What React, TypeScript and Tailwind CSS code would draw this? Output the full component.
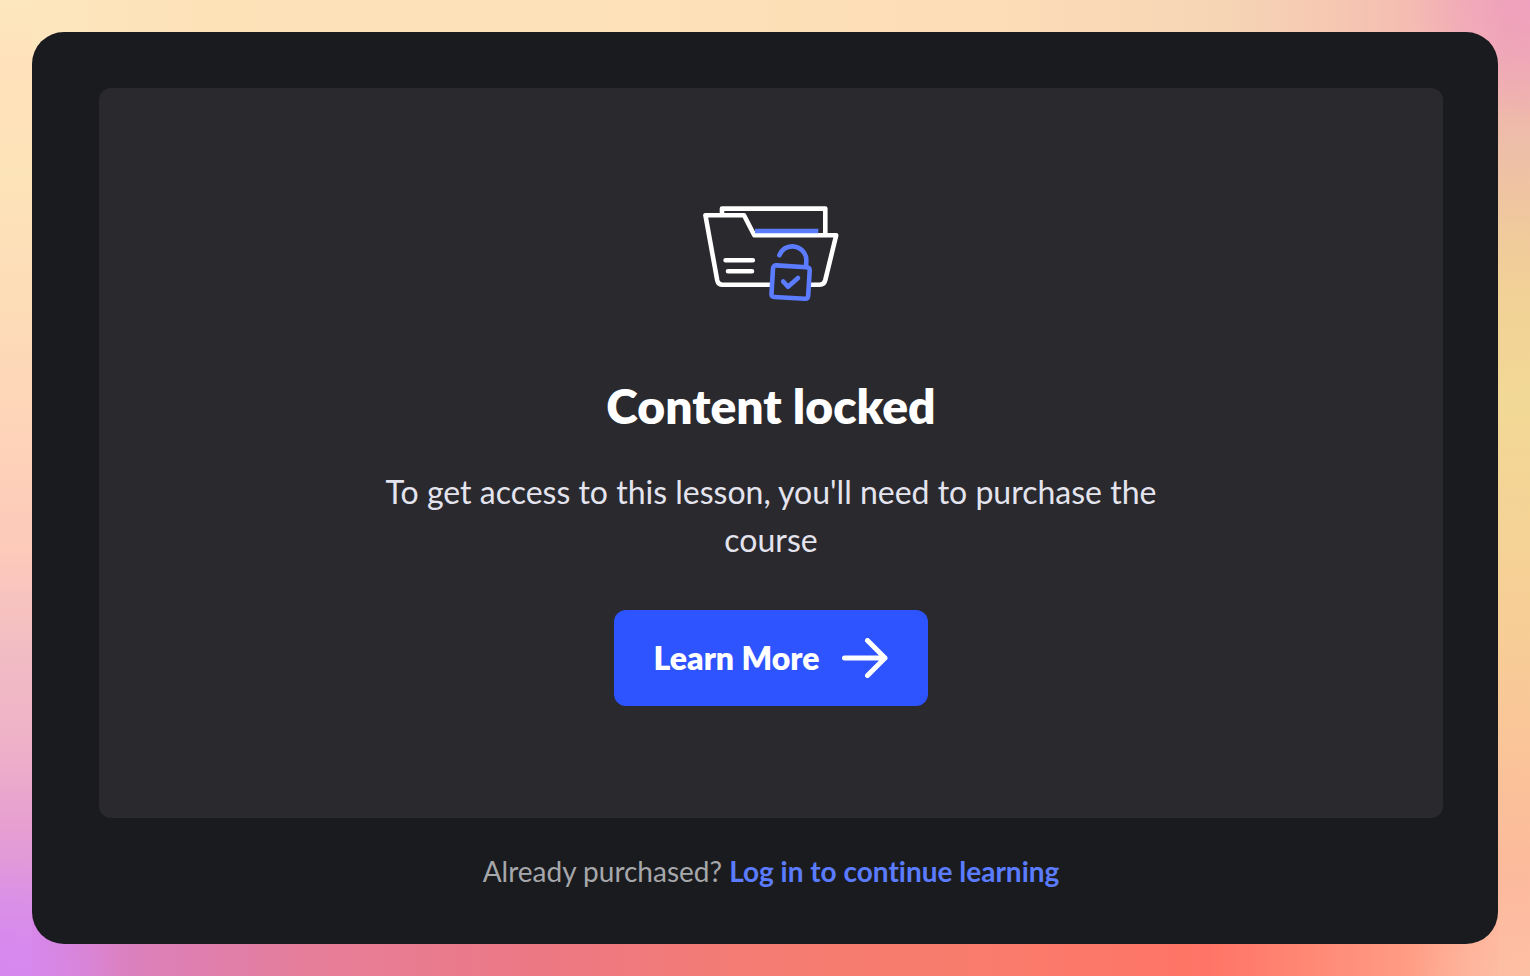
const FolderLockIcon = () => (
  <svg
    viewBox="0 0 144 112"
    className="h-28 w-36"
    fill="none"
    strokeWidth="4.6"
    strokeLinecap="round"
    strokeLinejoin="round"
    aria-hidden="true"
  >
    {/* Folder */}
    <g stroke="#ffffff">
      <path d="M23 13V8.6H126.3V34" />
      <path d="M71 84.7H23.8Q19.2 84.7 18.2 80.2L6.4 15.2H45L55.3 35.3H137.2L126.2 80.4Q125 84.7 120.8 84.7H112" />
      <path d="M26.6 60.3H53.8M29 71.3H53" />
    </g>
    <path d="M56 31H119.3" stroke="#5b7cff" strokeLinecap="butt" />

    {/* Padlock */}
    <g stroke="#5b7cff">
      <path d="M80.4 55.2C83 49.4 87.8 46.3 93.4 46.4C101.6 46.6 107.8 53.2 107.3 61L107 67" />
      <path d="M77.5 65.4L107.6 67.2Q110.9 67.4 110.7 70.5L109.2 95.7Q109 99 105.7 98.8L75.4 97Q72.4 96.8 72.5 93.6L74 68.6Q74.2 65.2 77.5 65.4Z" />
      <path d="M84.2 81.5L89 86.8L99 78" />
    </g>
  </svg>
);

const ArrowIcon = () => (
  <svg
    viewBox="0 0 46 40"
    className="h-10 w-[46px]"
    fill="none"
    stroke="currentColor"
    strokeWidth="5"
    strokeLinecap="round"
    strokeLinejoin="round"
    aria-hidden="true"
  >
    <path d="M2.5 20H43M25.5 2.5L43 20L25.5 37.5" />
  </svg>
);

const LockedContent = () => (
  <section className="flex flex-col items-center rounded-xl bg-[#2a292e] px-8 py-28 text-center">
    <FolderLockIcon />
    <h1 className="mt-16 text-5xl leading-[60px] font-extrabold text-white">Content locked</h1>
    <p className="mt-8 max-w-[800px] text-[32px] leading-[48px] text-[#e4e4ee]">
      To get access to this lesson, you'll need to purchase the course
    </p>
    <button
      type="button"
      className="mt-[46px] flex h-24 items-center gap-[23px] rounded-xl bg-[#2e54ff] px-10 text-[32px] font-extrabold text-white"
    >
      Learn More
      <ArrowIcon />
    </button>
  </section>
);

export default function App() {
  return (
    <div className="flex min-h-screen flex-col bg-[radial-gradient(circle_at_left_bottom,#d688ee,#d688ee00_120px),radial-gradient(circle_at_right_top,#efa0bc,#efa0bc00_120px),radial-gradient(circle_at_right_bottom,#fdbfa4,#fdbfa400_120px),linear-gradient(to_bottom,#fde7bf,#ffe1ba_8%,#fde3b8_18%,#fddcb8_31%,#fed6b8_41%,#fdcaba_56%,#f2bcc4_67%,#eeb0c8_77%,#e69ed2_85%,#dc94e2_93%,#d688ee),linear-gradient(to_bottom,#f2aaba,#f0b0b0_7%,#eebea8_15%,#f0ca9c_24%,#f2d196_30%,#f2d896_41%,#f5d296_56%,#f8cc96_67%,#fbc09a_82%,#fdb89c_92%,#fdb8a0),linear-gradient(to_right,#fde7bf,#fde2b8_13%,#fde2b9_33%,#fddfb6_52%,#fddcb8_65%,#f6d5b5_80%,#f6c8b2_87%,#f4b8b2_94%,#f2aaba),linear-gradient(to_right,#d688ee,#dc80bc_9%,#e67e9a_20%,#ec7884_35%,#f57c72_50%,#f87c6c_63%,#ff7466_79%,#ff9c84_92%,#fdb8a0)] bg-[size:100%_100%,100%_100%,100%_100%,32px_100%,32px_100%,100%_50%,100%_50%] bg-[position:left_top,left_top,left_top,left_top,right_top,left_top,left_bottom] bg-no-repeat p-8 font-[Lato,sans-serif] [font-variant-ligatures:none]">
      <main className="flex-1 rounded-[32px] bg-[#1a1b1e] pt-14 pr-[55px] pb-[52px] pl-[67px]">
        <LockedContent />
        <p className="mt-8 text-center text-[28px] leading-[42px] text-[#a6a7ab]">
          Already purchased?{" "}
          <a href="#login" className="font-bold text-[#5b7cff]">
            Log in to continue learning
          </a>
        </p>
      </main>
    </div>
  );
}
